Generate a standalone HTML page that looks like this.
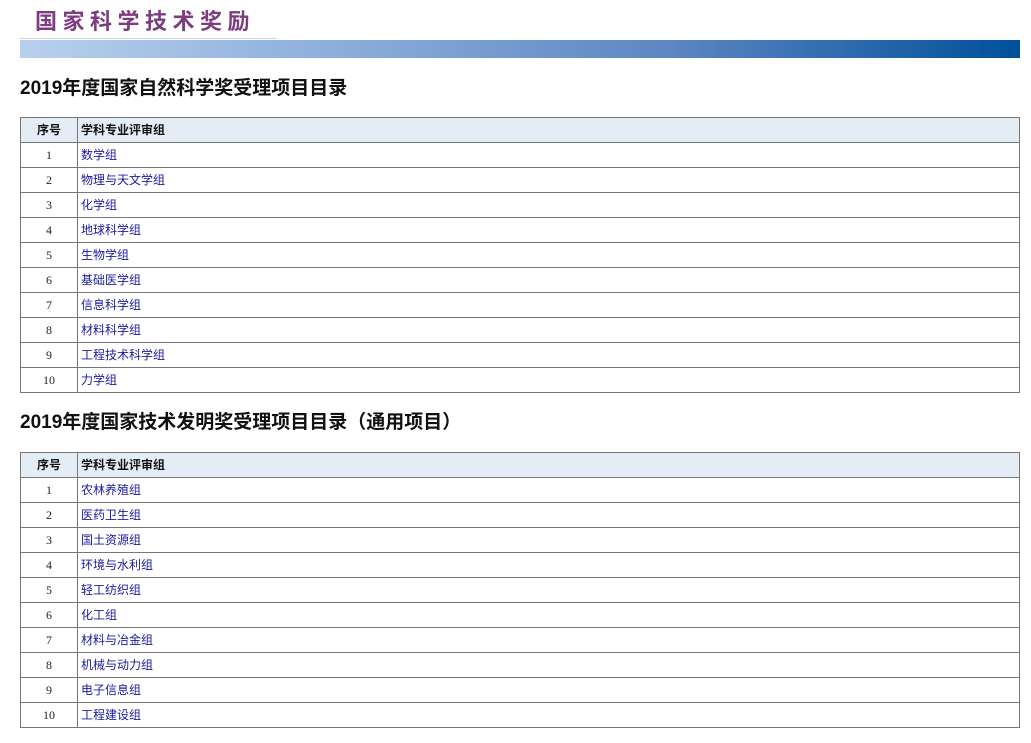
<!DOCTYPE html>
<html><head><meta charset="utf-8"><style>
body{margin:0;width:1031px;height:743px;background:#fff;font-family:"Liberation Sans","Noto Sans CJK SC",sans-serif;position:relative;overflow:hidden}
.logo{position:absolute;left:35px;top:7px;font-size:22px;font-weight:bold;color:#7b3c80;letter-spacing:5.5px;line-height:30px}
.line{position:absolute;left:20px;top:38px;width:256px;height:1px;background:#c9d6e6}
.bar{position:absolute;left:20px;top:40px;width:1000px;height:18px;background:linear-gradient(90deg,#b8d0ec 0%,#8fb0dc 30%,#5d86c2 65%,#00509a 100%)}
h2{position:absolute;left:20px;margin:0;font-size:19px;font-weight:bold;color:#111;line-height:24px}
table{position:absolute;left:20px;width:1000px;border-collapse:collapse;font-size:12px}
td,th{border:1px solid #777;height:24px;padding:0 3px;line-height:24px}
th{background:#e4ecf6;text-align:left;font-weight:bold;color:#111}
th:first-child,td:first-child{width:56px;text-align:center;padding:0}
td:first-child{color:#222;font-family:"Liberation Serif","Noto Serif CJK SC",serif}
td a{color:#1a1aa0;text-decoration:none}
</style></head><body>
<div class="logo">国家科学技术奖励</div>
<div class="line"></div>
<div class="bar"></div>
<h2 style="top:77px">2019年度国家自然科学奖受理项目目录</h2>
<table style="top:117px">
<tr><th>序号</th><th>学科专业评审组</th></tr>
<tr><td>1</td><td><a>数学组</a></td></tr>
<tr><td>2</td><td><a>物理与天文学组</a></td></tr>
<tr><td>3</td><td><a>化学组</a></td></tr>
<tr><td>4</td><td><a>地球科学组</a></td></tr>
<tr><td>5</td><td><a>生物学组</a></td></tr>
<tr><td>6</td><td><a>基础医学组</a></td></tr>
<tr><td>7</td><td><a>信息科学组</a></td></tr>
<tr><td>8</td><td><a>材料科学组</a></td></tr>
<tr><td>9</td><td><a>工程技术科学组</a></td></tr>
<tr><td>10</td><td><a>力学组</a></td></tr>
</table>
<h2 style="top:411px">2019年度国家技术发明奖受理项目目录（通用项目）</h2>
<table style="top:452px">
<tr><th>序号</th><th>学科专业评审组</th></tr>
<tr><td>1</td><td><a>农林养殖组</a></td></tr>
<tr><td>2</td><td><a>医药卫生组</a></td></tr>
<tr><td>3</td><td><a>国土资源组</a></td></tr>
<tr><td>4</td><td><a>环境与水利组</a></td></tr>
<tr><td>5</td><td><a>轻工纺织组</a></td></tr>
<tr><td>6</td><td><a>化工组</a></td></tr>
<tr><td>7</td><td><a>材料与冶金组</a></td></tr>
<tr><td>8</td><td><a>机械与动力组</a></td></tr>
<tr><td>9</td><td><a>电子信息组</a></td></tr>
<tr><td>10</td><td><a>工程建设组</a></td></tr>
</table>
</body></html>
